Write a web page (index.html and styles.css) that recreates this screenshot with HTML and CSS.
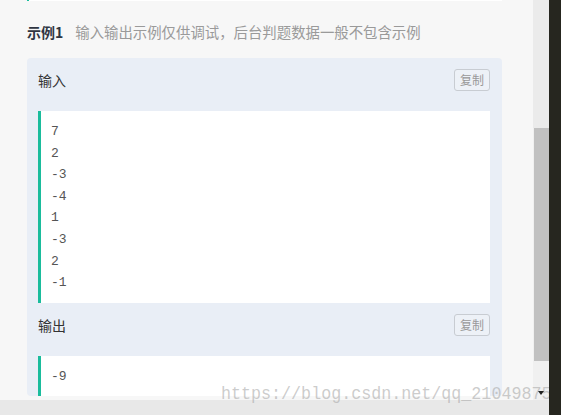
FILE: index.html
```html
<!DOCTYPE HTML>
<html>
<head>
<meta http-equiv="Content-Type" content="text/html; charset=utf-8">
<title>示例</title>
<link rel="stylesheet" href="styles.css">
</head>
<body>
<div class="screen">
	<div class="win">
		<div class="view">
			<!-- 页面内容 -->
			<div class="page">
				<div class="prev-block"></div>
				<div class="sample-hd">
					<b class="sample-tit">示例1</b>
					<span class="sample-tip">输入输出示例仅供调试，后台判题数据一般不包含示例</span>
				</div>
				<div class="sample-card">
					<div class="card-hd">
						<span class="card-tit">输入</span>
						<a href="javascript:;" class="copy-btn">复制</a>
					</div>
					<pre class="code">7
2
-3
-4
1
-3
2
-1</pre>
					<div class="card-hd">
						<span class="card-tit">输出</span>
						<a href="javascript:;" class="copy-btn">复制</a>
					</div>
					<pre class="code">-9</pre>
				</div>
			</div>
			<!-- 竖向滚动条 -->
			<div class="vbar">
				<div class="vbar-track"></div>
				<div class="vbar-thumb"></div>
				<div class="vbar-track vbar-rest"></div>
				<div class="vbar-btn"><i class="arrow-down"></i></div>
			</div>
		</div>
		<!-- 横向滚动条 -->
		<div class="hbar"></div>
		<!-- 水印 -->
		<span class="watermark">https://blog.csdn.net/qq_21049875</span>
	</div>
	<div class="edge"></div>
</div>
</body>
</html>
```
FILE: styles.css
```css
html,body{margin:0;padding:0;}
body{width:561px;height:415px;overflow:hidden;font-family:"Microsoft Yahei","Noto Sans CJK SC","Noto Sans",sans-serif;}
.screen{display:flex;height:415px;}
.win{width:549px;display:flex;flex-direction:column;position:relative;overflow:hidden;}
.view{display:flex;height:400px;}
.page{flex:1;background:#f7f7f7;overflow:hidden;padding:0 31px 0 27px;}
.prev-block{height:1px;background:#fff;border-left:2px solid #1abc9c;}

.sample-hd{margin:21px 0 16px;height:20px;line-height:20px;display:flex;align-items:center;white-space:nowrap;}
.sample-tit{font-size:14px;font-weight:bold;color:#2f3542;margin-right:12px;}
.sample-tip{font-size:14.4px;color:#9a9a9a;}

.sample-card{background:#e9eef6;border-radius:4px;padding:0 12px 0 11px;}
.card-hd{display:flex;align-items:center;justify-content:space-between;height:22px;padding:11px 0 20px;}
.card-tit{font-size:14px;color:#333;}
.copy-btn{font-size:12px;line-height:20px;height:20px;padding:0 5px;border:1px solid #c8ccd2;border-radius:3px;color:#999;text-decoration:none;background:#edf1f7;}

.code{margin:0;background:#fff;border-left:3px solid #1abc9c;padding:10px 10px 9px 10px;font-family:"Liberation Mono","DejaVu Sans Mono",monospace;font-size:13px;line-height:21.6px;color:#555;}

.vbar{width:16px;display:flex;flex-direction:column;background:#f0f0f0;}
.vbar-track{height:128px;background:#ebebeb;}
.vbar-thumb{height:233px;background:#c1c1c1;margin-left:1px;}
.vbar-rest{flex:1;height:auto;background:#f0f0f0;}
.vbar-btn{height:16px;display:flex;align-items:center;justify-content:center;position:relative;z-index:2;}
.arrow-down{width:0;height:0;border-left:3.5px solid transparent;border-right:3.5px solid transparent;border-top:4px solid #222;margin-top:1px;}

.hbar{height:15px;background:#e8e8e8;}
.edge{width:12px;background:#26261f;}

.watermark{position:absolute;left:221px;top:384px;z-index:1;font-family:"Liberation Mono",monospace;font-size:16.7px;line-height:20px;color:rgba(170,170,170,.6);white-space:nowrap;transform:scaleY(1.15);}
```
